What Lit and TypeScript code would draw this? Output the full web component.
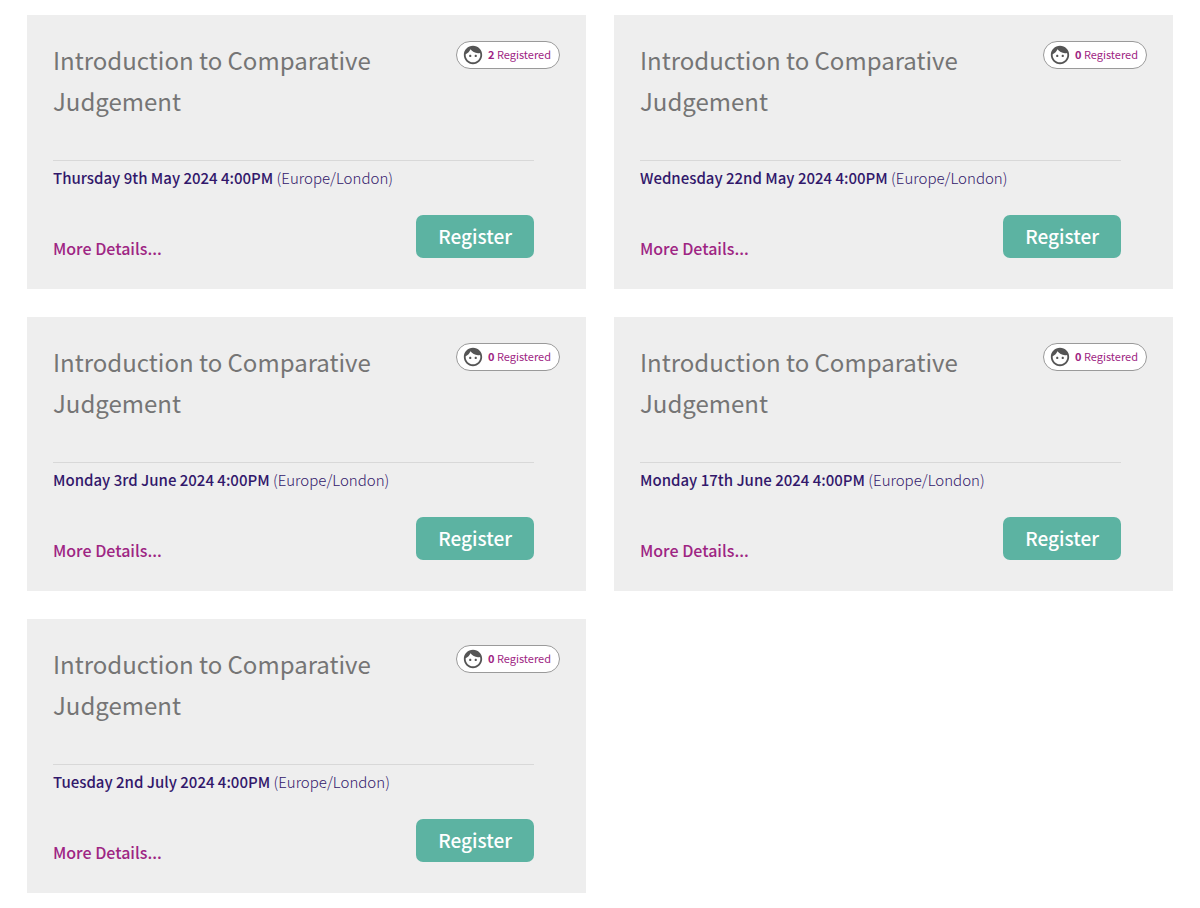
import { LitElement, html, css } from "lit";
import { customElement, property } from "lit/decorators.js";

interface CourseEvent {
  title: string;
  date: string;
  zone: string;
  registered: number;
}

const title = "Introduction to Comparative Judgement";
const zone = "Europe/London";

const events: CourseEvent[] = [
  { title, zone, date: "Thursday 9th May 2024 4:00PM", registered: 2 },
  { title, zone, date: "Wednesday 22nd May 2024 4:00PM", registered: 0 },
  { title, zone, date: "Monday 3rd June 2024 4:00PM", registered: 0 },
  { title, zone, date: "Monday 17th June 2024 4:00PM", registered: 0 },
  { title, zone, date: "Tuesday 2nd July 2024 4:00PM", registered: 0 },
];

@customElement("event-card")
export class EventCard extends LitElement {
  @property({ attribute: false }) event!: CourseEvent;

  static styles = css`
    :host {
      display: block;
    }
    .card {
      box-sizing: border-box;
      height: 100%;
      padding: 24px 26px 31px;
      background: #eeeeee;
    }
    .header {
      display: flex;
      align-items: flex-start;
      justify-content: space-between;
      gap: 24px;
      min-height: 121px;
    }
    .title {
      margin: 0;
      font-size: 24px;
      font-weight: 400;
      line-height: 41px;
      color: #757575;
    }
    .badge {
      display: flex;
      flex: none;
      align-items: center;
      gap: 4px;
      box-sizing: border-box;
      height: 28px;
      margin-top: 2px;
      padding: 0 8px 0 5px;
      border: 1px solid #9a9a9a;
      border-radius: 14px;
      background: #ffffff;
      font-size: 11px;
      line-height: 16px;
      color: #9e2583;
      white-space: nowrap;
    }
    .label {
      padding-bottom: 2px;
    }
    .count {
      font-weight: 700;
    }
    .face {
      width: 22px;
      height: 22px;
      fill: #555555;
    }
    .body {
      margin-right: 26px;
      border-top: 1px solid #d8d8d8;
    }
    .date {
      margin: 0;
      padding-top: 5px;
      font-size: 15px;
      font-weight: 300;
      line-height: 24px;
      color: #32186b;
    }
    .when {
      font-weight: 500;
    }
    .actions {
      display: flex;
      align-items: flex-end;
      justify-content: space-between;
      margin-top: 25px;
    }
    .details {
      font-size: 16px;
      font-weight: 500;
      line-height: 20px;
      color: #9e2583;
      text-decoration: none;
    }
    .register {
      height: 43px;
      padding: 0 22px 2px;
      border: 0;
      border-radius: 7px;
      background: #5cb3a2;
      font-family: inherit;
      font-size: 19px;
      font-weight: 500;
      line-height: 24px;
      color: #ffffff;
      cursor: pointer;
    }
  `;

  render() {
    const { title, date, zone, registered } = this.event;
    return html`
      <article class="card">
        <header class="header">
          <h2 class="title">${title}</h2>
          <div class="badge">
            <svg class="face" viewBox="0 0 24 24" aria-hidden="true">
              <path
                d="M9 11.75c-.69 0-1.25.56-1.25 1.25s.56 1.25 1.25 1.25 1.25-.56 1.25-1.25-.56-1.25-1.25-1.25zm6 0c-.69 0-1.25.56-1.25 1.25s.56 1.25 1.25 1.25 1.25-.56 1.25-1.25-.56-1.25-1.25-1.25zM12 2C6.48 2 2 6.48 2 12s4.480 10 10 10 10-4.480 10-10S17.520 2 12 2zm0 18c-4.410 0-8-3.590-8-8 0-.29.020-.58.050-.86 2.360-1.050 4.230-2.980 5.210-5.370C11.070 8.330 14.050 10 17.420 10c.78 0 1.530-.09 2.250-.26.21.71.33 1.470.33 2.260 0 4.410-3.590 8-8 8z"
              />
            </svg>
            <span class="label"><span class="count">${registered}</span> Registered</span>
          </div>
        </header>
        <div class="body">
          <p class="date"><span class="when">${date}</span> (${zone})</p>
          <div class="actions">
            <a class="details" href="#">More Details...</a>
            <button class="register" type="button">Register</button>
          </div>
        </div>
      </article>
    `;
  }
}

@customElement("app-root")
export class AppRoot extends LitElement {
  static styles = css`
    :host {
      display: block;
      background: #ffffff;
      font-family: "Noto Sans CJK SC", "Noto Sans", sans-serif;
    }
    .grid {
      display: grid;
      grid-template-columns: repeat(2, minmax(0, 1fr));
      gap: 28px;
      padding: 15px 27px;
    }
    @media (max-width: 760px) {
      .grid {
        grid-template-columns: minmax(0, 1fr);
      }
    }
  `;

  render() {
    return html`
      <main class="grid">
        ${events.map((event) => html`<event-card .event=${event}></event-card>`)}
      </main>
    `;
  }
}
